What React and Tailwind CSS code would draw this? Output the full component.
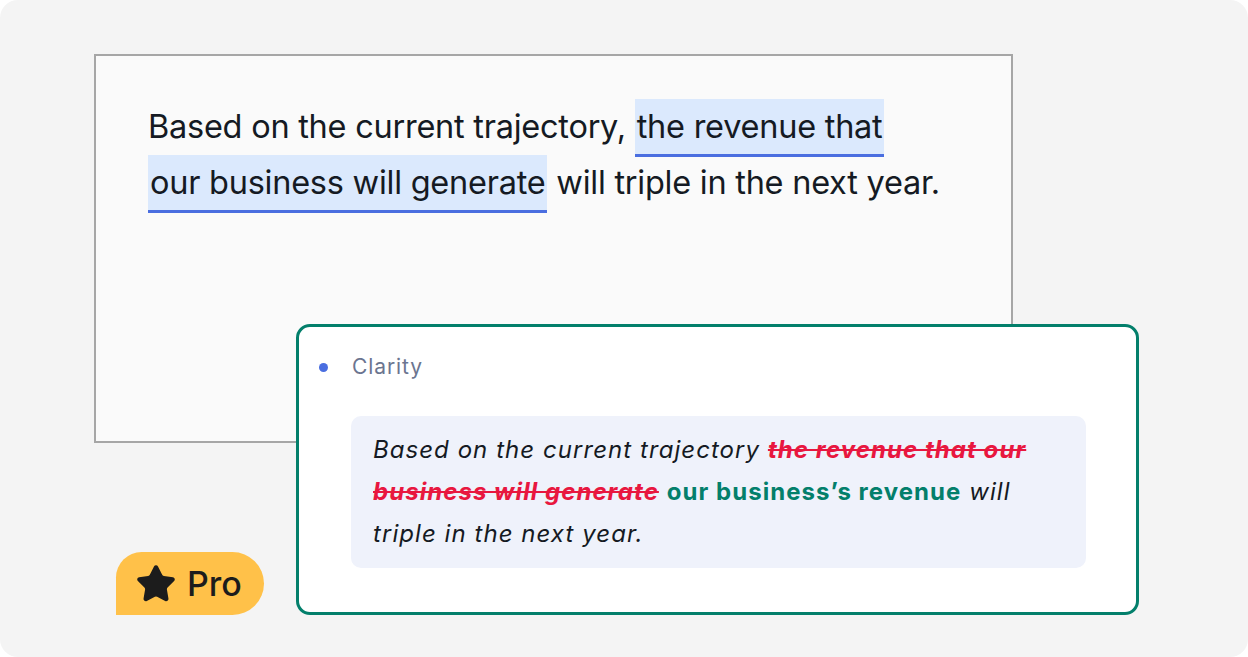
import { Star } from 'lucide-react'

export default function App() {
  return (
    <div className="h-[657px] w-[1248px] bg-white font-['Inter',sans-serif]">
      <div className="relative h-full w-full rounded-[18px] bg-[#f4f4f4] pl-[94px] pt-[54px]">
        {/* Document */}
        <div className="h-[389px] w-[919px] border-2 border-[#a6a6a6] bg-[#fafafa] pl-[52px] pr-[20px] pt-[43px]">
          <p className="text-[32.5px] leading-[56px] tracking-[-0.25px] text-[#151a23]">
            Based on the current trajectory,{' '}
            <span className="box-decoration-clone border-b-[3px] border-[#4a6ee0] bg-[#dbe9fd] px-[2px] py-[8px]">
              the revenue that
              <br />
              our business will generate
            </span>{' '}
            will triple in the next year.
          </p>
        </div>

        {/* Suggestion card */}
        <div className="absolute left-[296px] top-[324px] h-[291px] w-[843px] rounded-[14px] border-[3px] border-[#037f6b] bg-white pl-[52px] pr-[50px] pt-[26px]">
          <div className="flex items-center">
            <span className="-ml-[32px] mr-[24px] h-[9px] w-[9px] rounded-full bg-[#4a6ee0]" />
            <span className="text-[21px] leading-[28px] tracking-[0.9px] text-[#6b7590]">Clarity</span>
          </div>
          <div className="mt-[35px] rounded-[10px] bg-[#eff2fb] px-[22px] py-[13px]">
            <p className="text-[24px] italic leading-[42px] tracking-[1.05px] text-[#151a23]">
              Based on the current trajectory{' '}
              <span className="font-bold text-[#e8173f] line-through">the revenue that our business will generate</span>{' '}
              <span className="font-bold not-italic text-[#037f6b]">our business’s revenue</span> will triple in the next year.
            </p>
          </div>
        </div>

        {/* Pro badge */}
        <div className="absolute left-[116px] top-[552px] flex h-[63px] w-[148px] items-center gap-[10px] rounded-bl-none rounded-br-[32px] rounded-tl-[26px] rounded-tr-[32px] bg-[#ffc149] pl-[19px]">
          <Star size={42} fill="#1c1c1c" strokeWidth={1.5} className="text-[#1c1c1c]" />
          <span className="text-[34px] font-medium leading-none text-[#1c1c1c]">Pro</span>
        </div>
      </div>
    </div>
  )
}
